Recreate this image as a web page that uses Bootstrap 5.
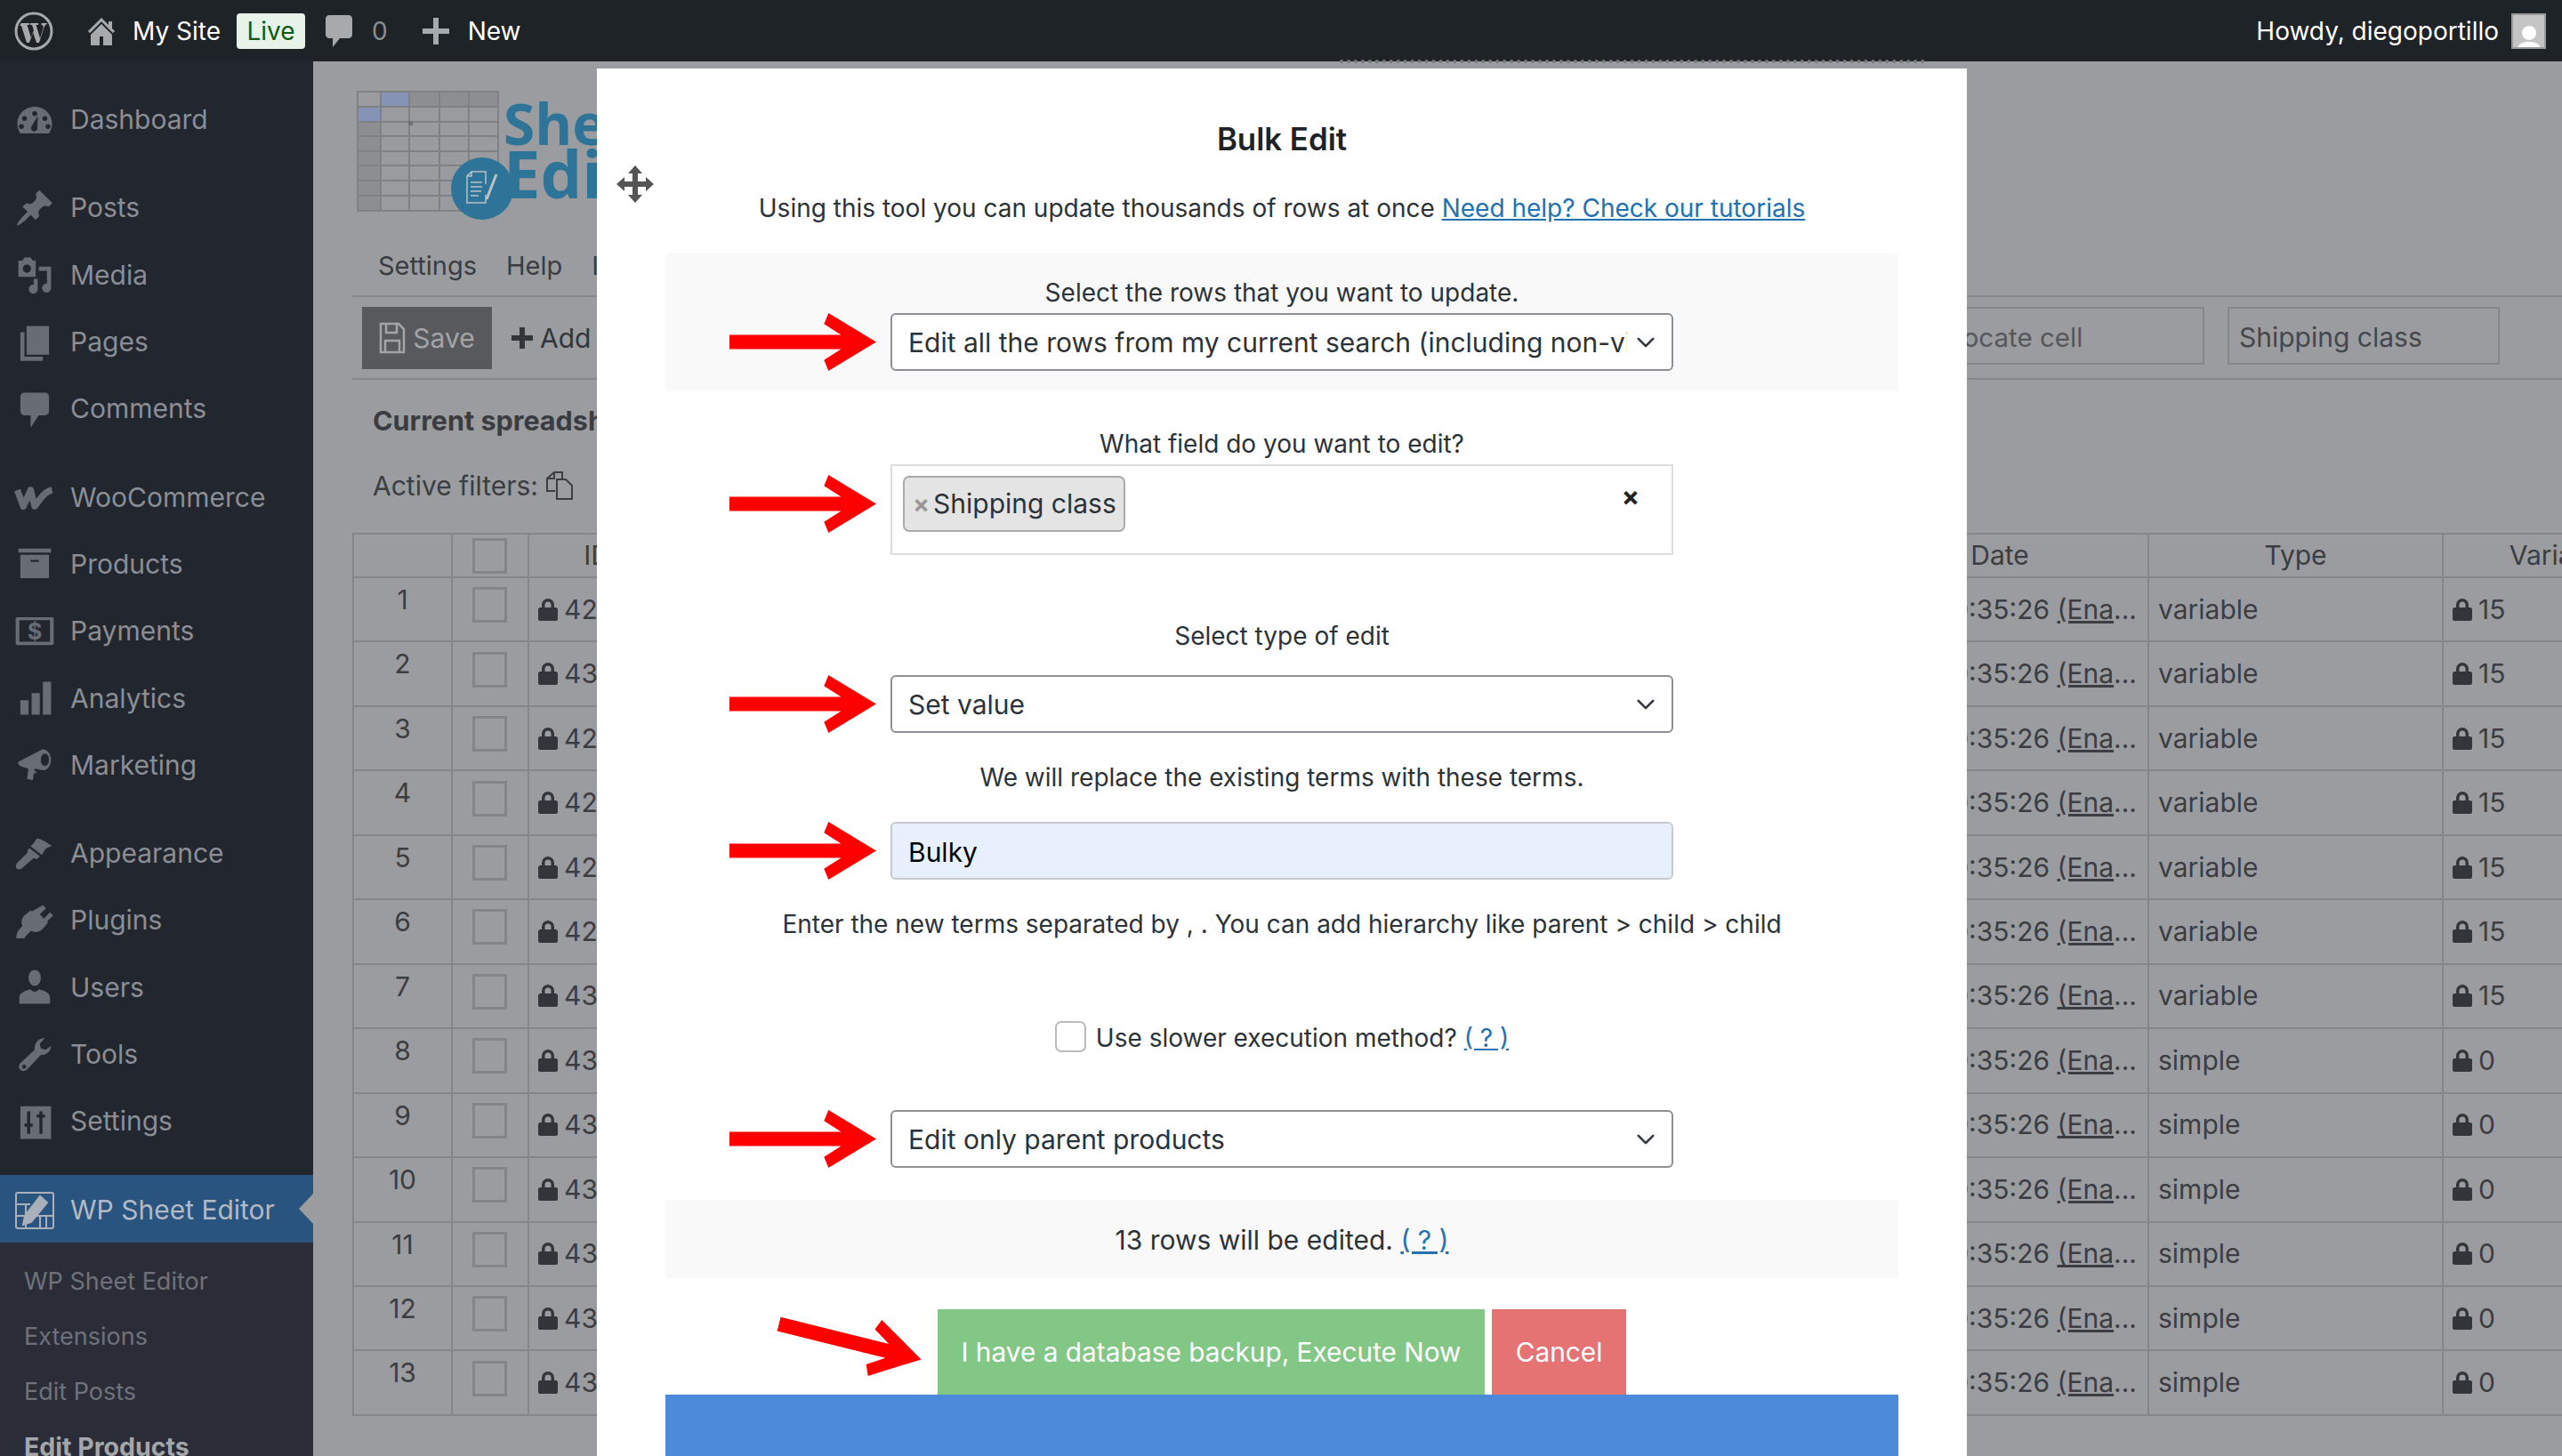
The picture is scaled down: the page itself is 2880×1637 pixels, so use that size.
<!DOCTYPE html>
<html lang="en">
<head>
    <meta charset="UTF-8">
    <meta name="viewport" content="width=device-width, initial-scale=1.0">
    <title>Bulk Edit</title>
    <link href="https://cdn.jsdelivr.net/npm/bootstrap@5.3.0/dist/css/bootstrap.min.css" rel="stylesheet">
    <style>
        html, body { height: 1637px; overflow: hidden; }
        body {
            font-family: Inter, "Liberation Sans", sans-serif;
            font-size: 28px;
            background-color: #9b9c9f;
            color: #3b3d42;
        }
        /* admin bar */
        .adminbar { height: 69px; background-color: #1e2328; color: #fff; padding: 0; font-size: 28px; }
        .bar-logo { width: 46px; height: 46px; margin-left: 15px; margin-right: 33px; fill: #a7aaad; }
        .bar-icon { fill: #a7aaad; flex: none; }
        .bar-site { margin-left: 15px; }
        .live-tag { background-color: #e7f3e9; color: #0e5a14; border-radius: 4px; height: 40px; width: 77px; line-height: 40px; text-align: center; margin: 0 23px 0 18px; }
        .bar-count { color: #8a8e93; margin: 0 39px 0 22px; }
        .bar-new { margin-left: 21px; }
        .bar-user { margin-right: 18px; }
        .bar-avatar { width: 39px; height: 40px; background-color: #c4c4c4; border: 2px solid #9a9a9a; margin-left: 14px; overflow: hidden; }
        .drag-strip { position: absolute; left: 1506px; top: 67px; width: 658px; border-top: 4px dotted #77787c; }

        /* sidebar */
        .page-wrap { height: 1568px; }
        .side-menu { width: 352px; flex: none; background-color: #22262f; padding-top: 27px; overflow: hidden; }
        .side-item { display: flex; align-items: center; height: 75.3px; padding-top: 2px; color: #8b8e95; font-size: 30px; position: relative; }
        .side-item svg { width: 46px; height: 46px; margin-left: 16px; margin-right: 17px; fill: #686c74; flex: none; }
        .side-gap { margin-top: 24px; }
        .side-active { background-color: #2a5480; color: #b3bac4; }
        .side-active svg { fill: none; stroke: #a9b0ba; }
        .side-active::after {
            content: ""; position: absolute; right: 0; top: 21px;
            border: 17px solid transparent; border-right: 16px solid #9b9c9f; border-left: 0;
        }
        .side-sub { background-color: #2a2d37; padding-top: 13px; height: 300px; }
        .side-sub div { height: 62px; line-height: 62px; padding-left: 27px; font-size: 27px; color: #6f727a; }
        .side-sub .sub-current { color: #a4a6ab; font-weight: 700; font-size: 28.5px; }

        /* sheet behind the modal */
        .sheet-area { padding-top: 33px; overflow: hidden; min-width: 0; }
        .sheet-logo { margin-left: 49px; height: 146px; }
        .sheet-logo-name { font-family: "Open Sans", sans-serif; font-weight: 700; color: #2e7398; line-height: 56px; margin-left: -15px; padding-top: 9px; }
        .sheet-logo-name div:first-child { font-size: 64px; }
        .sheet-logo-name div:last-child { font-size: 74px; }
        .sheet-menu { margin-left: 44px; height: 86px; border-bottom: 2px solid #87888c; padding: 34px 0 0 29px; gap: 33px; font-size: 29px; color: #3a3c41; line-height: 34px; }
        .sheet-tools { margin-left: 44px; height: 93px; border-bottom: 2px solid #87888c; padding: 11px 70px 0 11px; }
        .save-btn { width: 146px; height: 70px; background-color: #58595d; color: #a3a4a8; border: 0; border-radius: 0; font-size: 30px; padding: 0; }
        .save-btn:hover { background-color: #58595d; color: #a3a4a8; }
        .add-btn { color: #33353a; margin-left: 22px; font-size: 30px; height: 70px; }
        .tool-input { height: 65px; width: 306px; background: transparent; border: 2px solid #85868a; padding: 0 11px; font-size: 30px; color: #45474c; line-height: 65px; }
        .tool-input.placeholder-ish { width: 301px; color: #55565b; margin-right: 26px; font-size: 29.5px; }
        .sheet-current { margin: 28px 0 0 67px; line-height: 36px; font-weight: 700; font-size: 30.5px; color: #3a3c41; }
        .sheet-filters { margin: 37px 0 0 67px; line-height: 36px; font-size: 30px; }
        .grid-table {
            table-layout: fixed; width: 2639px; margin: 35px 0 0 44px;
            border-collapse: collapse; color: #3b3d42; font-size: 30px;
        }
        .grid-table th, .grid-table td { border: 2px solid #85868a; padding: 0 12px; white-space: nowrap; overflow: hidden; font-weight: 400; }
        .grid-table th { height: 49px; text-align: center; vertical-align: middle; }
        .grid-table td { height: 72.46px; vertical-align: middle; }
        .grid-table td.row-num { text-align: center; vertical-align: top; padding-top: 2px; font-size: 30px; }
        .grid-table td.type-cell { padding-left: 10px; }
        .grid-check { display: block; width: 39px; height: 40px; border: 3px solid #84858a; margin: 0 auto; position: relative; top: -5px; left: -1px; }
        .grid-table th .grid-check { top: 0; }
        .lock-icon { width: 22px; height: 26px; fill: #33353a; margin-right: 7px; margin-left: -2px; vertical-align: -2px; }
        .date-cell a { color: inherit; }
        .col-num { width: 111px; }
        .col-check { width: 86px; }
        .col-id { width: 154px; }
        .col-title { width: 1333px; }
        .col-date { width: 334px; }
        .col-type { width: 331px; }
        .col-vari { width: 290px; }

        /* modal */
        .bulk-modal {
            position: absolute; left: 671px; top: 77px; width: 1540px; height: 1560px;
            background-color: #fff; color: #2c3338; padding: 0 77px; overflow: hidden;
        }
        .move-handle { position: absolute; left: 22px; top: 109px; width: 42px; height: 42px; fill: #555; }
        .bulk-title { font-size: 34.8px; font-weight: 600; color: #1d2327; text-align: center; margin: 0; padding-top: 59px; line-height: 40px; }
        .bulk-intro { text-align: center; margin: 40px 0 0; line-height: 36px; }
        .bulk-intro a, .help-link { color: #2271b1; }
        .shade-box { background-color: #f9f9f9; }
        .field-label { text-align: center; line-height: 36px; }
        .field-row { display: flex; align-items: center; padding-left: 72px; }
        .field-arrow { width: 165px; height: 65px; fill: #f00; margin-right: 16px; flex: none; }
        .field-control {
            width: 880px; height: 65px; flex: none; font-size: 30px; color: #2c3338; padding: 2px 50px 0 18px;
            border: 2px solid #8c8f94; border-radius: 6px; background-size: 30px 22px; background-position: right 14px center;
        }
        .bulky-input { background-color: #e8f0fe; border-color: #c6c9cd; color: #000; padding-right: 18px; }
        .tags-box { width: 880px; height: 102px; border: 2px solid #ddd; padding: 11px 12px; flex: none; }
        .tag-chip { height: 63px; width: 250px; background-color: #e4e4e4; border: 2px solid #aaa; border-radius: 7px; line-height: 59px; padding-left: 9px; white-space: nowrap; font-size: 30px; }
        .tag-chip span { color: #999; font-weight: 700; font-size: 28px; margin-right: 4px; }
        .tags-clear { font-weight: 700; color: #222; margin: 8px 24px 0 0; font-size: 30px; line-height: 30px; }
        .tags-arrow { margin-bottom: 14px; }
        .slow-check { width: 35px; height: 35px; margin: 0 11px 0 0; border: 2px solid #bbb; border-radius: 6px; flex: none; }
        .bulk-actions { padding-left: 125px; height: 96px; margin-top: 35px; }
        .bulk-actions .field-arrow { transform: rotate(14deg); margin-right: 16px; margin-top: -24px; }
        .run-btn, .stop-btn { height: 96px; border: 0; border-radius: 0; color: #fff; font-size: 29.8px; padding: 0; }
        .run-btn { width: 615px; background-color: #82c785; margin-right: 8px; }
        .stop-btn { width: 151px; background-color: #e57373; }
        .blue-strip { height: 69px; background-color: #4d8ada; }
        .bulk-first { margin-top: 33px; height: 155px; padding-top: 26px; }
        .bulk-first .field-label { margin-bottom: 5px; }
        .bulk-second { margin-top: 41px; margin-bottom: 5px; }
        .bulk-third { margin-top: 73px; margin-bottom: 26px; }
        .bulk-note { margin-top: 32px; margin-bottom: 32px; }
        .bulk-hint { margin-top: 32px; }
        .bulk-slow { height: 35px; margin-top: 91px; }
        .bulk-slow span { position: relative; top: 1px; }
        .bulk-parent { margin-top: 65px; }
        .bulk-count { margin-top: 36px; height: 88px; line-height: 90px; font-size: 30px; }
    </style>
</head>
<body>
    <!-- admin bar -->
    <nav class="navbar adminbar flex-nowrap">
        <div class="d-flex align-items-center">
            <svg class="bar-logo" viewBox="0 0 46 46"><circle cx="23" cy="23" r="20" fill="none" stroke="#a7aaad" stroke-width="3"/><path d="M9 14h9v2h-2.500l4.500 15 3-9-2-6h-2v-2h9v2h-2.500l4.500 15 3.500-11c.7-2.500-.5-4-2-4v-2h7c-1 1-3 2-4 5l-5.500 17h-3l-4-12-4 12h-3l-6-19h-2z"/></svg>
            <svg class="bar-icon" width="40" height="40" viewBox="0 0 20 20"><path d="M16 8.500l1.530 1.530-1.060 1.060L10 4.620l-6.470 6.470-1.060-1.060L10 2.500l4 4v-2h2v4zm-6-2.460l6 5.990V18h-5v-5H9v5H4v-5.970z"/></svg>
            <span class="bar-site">My Site</span>
            <span class="live-tag">Live</span>
            <svg class="bar-icon" width="30" height="40" viewBox="0 0 15 20"><path d="M2 1h11c1 0 2 1 2 2v9c0 1-1 2-2 2H8l-4 5v-5H2c-1 0-2-1-2-2V3c0-1 1-2 2-2z"/></svg>
            <span class="bar-count">0</span>
            <svg class="bar-icon" width="30" height="30" viewBox="0 0 30 30"><path d="M12 0h6v12h12v6H18v12h-6V18H0v-6h12z"/></svg>
            <span class="bar-new">New</span>
        </div>
        <div class="d-flex align-items-center bar-user">
            <span>Howdy, diegoportillo</span>
            <div class="bar-avatar">
                <svg width="35" height="36" viewBox="0 0 35 36"><circle cx="18" cy="15" r="8" fill="#fff"/><path d="M4 36c1-9 7-11 14-11s13 2 14 11z" fill="#fff"/></svg>
            </div>
        </div>
    </nav>
    <div class="drag-strip"></div>

    <div class="d-flex page-wrap">
        <!-- admin menu -->
        <div class="side-menu">
            <div class="side-item"><svg viewBox="0 0 20 20"><path fill-rule="evenodd" d="M3 16.500h14c1-1.300 1.500-3 1.500-4.600C18.500 7.200 14.700 3.500 10 3.500S1.500 7.200 1.500 11.900c0 1.600.5 3.300 1.500 4.600zM5 8a1.200 1.200 0 1 1 0 2.400A1.200 1.200 0 0 1 5 8zm5-2.400a1.200 1.200 0 1 1 0 2.400 1.200 1.200 0 0 1 0-2.400zm5 2.400a1.200 1.200 0 1 1 0 2.400A1.200 1.200 0 0 1 15 8zM3.500 12a1.200 1.200 0 1 1 0 2.400 1.200 1.200 0 0 1 0-2.400zm13 0a1.200 1.200 0 1 1 0 2.400 1.200 1.200 0 0 1 0-2.400zM11.500 8l-.2 5.500a1.600 1.600 0 1 1-2.700-.7z"/></svg>Dashboard</div>
            <div class="side-item side-gap"><svg viewBox="0 0 20 20"><path d="M10.440 3.020l1.820-1.820 6.360 6.350-1.830 1.820c-1.050-.68-2.480-.57-3.410.36l-.75.75c-.92.93-1.040 2.350-.35 3.410l-1.830 1.820-2.410-2.410-2.800 2.790c-.42.42-3.380 2.710-3.800 2.290s1.860-3.390 2.280-3.810l2.790-2.790L4.100 9.360l1.830-1.820c1.050.69 2.480.57 3.400-.36l.75-.75c.93-.92 1.050-2.350.36-3.410z"/></svg>Posts</div>
            <div class="side-item"><svg viewBox="0 0 20 20"><path fill-rule="evenodd" d="M2 3h2l1-1.500h3L9 3h1.500v8H2zm4.200 2a2 2 0 1 0 0 4 2 2 0 0 0 0-4z"/><path d="M12 6h6v10.500a2.200 2.200 0 1 1-2-2.200V8h-4zM9.500 12h2v5a2.200 2.200 0 1 1-2-2.200z"/></svg>Media</div>
            <div class="side-item"><svg viewBox="0 0 20 20"><path d="M6 2h11v14H6z"/><path d="M3 5h2v12h9v2H3z"/></svg>Pages</div>
            <div class="side-item"><svg viewBox="0 0 20 20"><path d="M5 2h10c1.100 0 2 .9 2 2v7c0 1.100-.9 2-2 2h-3l-4 6v-6H5c-1.100 0-2-.9-2-2V4c0-1.100.9-2 2-2z"/></svg>Comments</div>
            <div class="side-item side-gap"><svg viewBox="0 0 20 20"><path d="M1.500 6.500l3 8 3.500-8 2 8 3-4c1.500-2 3-3.500 5.500-4" fill="none" stroke="#686c74" stroke-width="3.200" stroke-linejoin="round"/></svg>WooCommerce</div>
            <div class="side-item"><svg viewBox="0 0 20 20"><path fill-rule="evenodd" d="M2 2.500h16v2H2zM3 5.500h14v11.500H3zM8 8v1h4V8z"/></svg>Products</div>
            <div class="side-item"><svg viewBox="0 0 20 20"><path fill-rule="evenodd" d="M1.500 3h17c.5 0 .8.300.8.800v12c0 .5-.3.800-.8.800h-17c-.5 0-.8-.3-.8-.8v-12c0-.5.300-.8.800-.8zM2.500 4.500v10.500h15V4.500z"/><text x="10" y="14" text-anchor="middle" font-size="11" font-weight="700" font-family="Inter, sans-serif">$</text></svg>Payments</div>
            <div class="side-item"><svg viewBox="0 0 20 20"><path d="M3 11h4v7H3zM8.500 7.500h4V18h-4zM14 2h4v16h-4z"/></svg>Analytics</div>
            <div class="side-item"><svg viewBox="0 0 20 20"><path fill-rule="evenodd" d="M2 8.500L13.500 2.500c2-.8 4.500 1.800 4.500 5s-2.300 5.800-4.500 5L10 11.800l-.2 1 1 .4-.2 1-1-.3-.5 3.600-2.800-.7.6-4.900-2.900-.9C2 10.500 1.700 9 2 8.500zM15 4.500c-1.200 0-2 1.300-2 3s.8 3 2 3 2-1.300 2-3-.8-3-2-3z"/></svg>Marketing</div>
            <div class="side-item side-gap"><svg viewBox="0 0 20 20"><path d="M11 2.500c2.500.3 4 1.300 7.500 3.700-1.500.5-3 .7-3.800 2.300l-1.200 2-5.500-4.200 1.300-1.300zM7.500 7.300l5 3.800-1.500 1.500-1.500-.5-5.500 4.800c-1 .9-2.500.9-3-.1s-.1-2 .8-2.800l4.800-4.700-.2-1z"/></svg>Appearance</div>
            <div class="side-item"><svg viewBox="0 0 20 20"><path d="M14 2.500l1.500 1.500-3 3 2 2 3-3L19 7.500l-3 3 .5.500-2.500 3c-1.800 1.800-4 2-5.800 1l-2.700 2.700-.5 1H1c0-2 .5-3.500 2-5l1-1C3.200 11 3.500 9 5 7.500l3-2.500.5.500z"/></svg>Plugins</div>
            <div class="side-item"><svg viewBox="0 0 20 20"><path d="M10 1.500c1.900 0 3 1.800 3 3.800s-1.200 4-3 4-3-2-3-4 1.100-3.800 3-3.800zM2.500 18v-3c0-1.500 1-2.500 3.500-3.500L8 11c.5.800 1.200 1.200 2 1.200s1.500-.4 2-1.200l2 .5c2.500 1 3.500 2 3.500 3.500v3z"/></svg>Users</div>
            <div class="side-item"><svg viewBox="0 0 20 20"><path fill-rule="evenodd" d="M18 5.500c0 2.500-2.200 4.800-5 4.500l-6.500 7c-1.100 1.200-2.800 1.200-3.600.2-.9-1-.7-2.400.3-3.400l6.800-6.300C9.600 4.500 11.500 1.800 15 1.800l-2.500 2.800.5 2.300 2.300.6zM4.800 14.800a1 1 0 1 0 0 2 1 1 0 0 0 0-2z"/></svg>Tools</div>
            <div class="side-item"><svg viewBox="0 0 20 20"><path fill-rule="evenodd" d="M3 2.500h15v16H3zM6.300 5v6H5v1.500h1.300V16h1.500v-3.500H9V11H7.800V5zm6 0v1.500H11V8h1.300v8h1.500V8H15V6.500h-1.200V5z"/></svg>Settings</div>
            <div class="side-item side-gap side-active"><svg viewBox="0 0 46 46" stroke-width="2"><rect x="2" y="4" width="42" height="40" rx="2"/><path d="M2 17h16M2 30h42M13 17v27M29 30v14M36 30v14"/><path d="M10 40l2-10L29 8l8 7-18 22z" fill="#a9b0ba"/></svg>WP Sheet Editor</div>
            <div class="side-sub">
                <div>WP Sheet Editor</div>
                <div>Extensions</div>
                <div>Edit Posts</div>
                <div class="sub-current">Edit Products</div>
            </div>
        </div>

        <!-- spreadsheet page, dimmed behind the modal -->
        <div class="sheet-area flex-grow-1">
            <div class="d-flex sheet-logo">
                <svg width="180" height="146" viewBox="0 0 180 146">
                    <rect x="1" y="1" width="158" height="134" fill="#9a9b9e"/>
                    <rect x="27" y="1" width="132" height="17" fill="#8d8e92"/>
                    <rect x="1" y="18" width="26" height="117" fill="#8d8e92"/>
                    <rect x="27" y="1" width="32" height="17" fill="#8594b4"/>
                    <rect x="1" y="18" width="26" height="17" fill="#8594b4"/>
                    <path d="M1 1h158v134H1zM27 1v134M59 1v134M93 1v134M126 1v134M1 18h158M1 35h158M1 51h158M1 68h158M1 84h158M1 101h158M1 118h158" fill="none" stroke="#808186" stroke-width="2"/>
                    <rect x="58" y="34" width="5" height="5" fill="#6f7074"/>
                    <circle cx="141" cy="110" r="35" fill="#2e7398"/>
                    <path d="M124 96l5-5h16v14M145 117v9h-21V96h5v-5" fill="none" stroke="#b9c2c8" stroke-width="1.500"/>
                    <path d="M128 103h13M128 108h13M128 113h12M128 118h9" stroke="#b9c2c8" stroke-width="1.500"/>
                    <path d="M146 122l11-28" stroke="#b9c2c8" stroke-width="3"/>
                </svg>
                <div class="sheet-logo-name"><div>Sheet</div><div>Editor</div></div>
            </div>
            <div class="d-flex sheet-menu"><span>Settings</span><span>Help</span><span>Import</span></div>
            <div class="d-flex justify-content-between sheet-tools">
                <div class="d-flex align-items-start">
                    <button class="btn save-btn d-flex align-items-center justify-content-center gap-2">
                        <svg width="30" height="36" viewBox="0 0 30 36" fill="none" stroke="#a3a4a8" stroke-width="2.500"><path d="M2 2h20l6 6v26H2z"/><path d="M8 2v10h12V2M7 34V21h16v13"/></svg>Save
                    </button>
                    <span class="add-btn d-flex align-items-center"><svg width="24" height="24" viewBox="0 0 24 24" class="me-2" fill="#33353a"><path d="M9 0h6v9h9v6h-9v9H9v-9H0V9h9z"/></svg>Add</span>
                </div>
                <div class="d-flex">
                    <div class="tool-input placeholder-ish">Locate cell</div>
                    <div class="tool-input">Shipping class</div>
                </div>
            </div>
            <div class="sheet-current">Current spreadsheet</div>
            <div class="sheet-filters d-flex align-items-center gap-2">Active filters:
                <svg width="32" height="34" viewBox="0 0 32 34" fill="none" stroke="#3b3d42" stroke-width="2"><path d="M11 23H2V9l8-7h9v8"/><path d="M13 10h10l7 7v15H13zM10 2v7H2"/></svg>
            </div>
            <table class="grid-table">
                <colgroup><col class="col-num"><col class="col-check"><col class="col-id"><col class="col-title"><col class="col-date"><col class="col-type"><col class="col-vari"></colgroup>
                <thead><tr><th></th><th><span class="grid-check"></span></th><th>ID</th><th>Title</th><th>Date</th><th>Type</th><th>Variations</th></tr></thead>
                <tbody id="sheetRows"></tbody>
            </table>
        </div>
    </div>

    <!-- bulk edit modal -->
    <div class="bulk-modal">
        <svg class="move-handle" viewBox="0 0 42 42"><path d="M21 0l8 9h-5v9h9v-5l9 8-9 8v-5h-9v9h5l-8 9-8-9h5v-9H9v5l-9-8 9-8v5h9V9h-5z"/></svg>
        <h5 class="bulk-title">Bulk Edit</h5>
        <p class="bulk-intro">Using this tool you can update thousands of rows at once <a href="#">Need help? Check our tutorials</a></p>

        <div class="shade-box bulk-first">
            <div class="field-label">Select the rows that you want to update.</div>
            <div class="field-row">
                <svg class="field-arrow" viewBox="0 0 163 64"><polygon points="0,24 124,24 105,12 110,0 163,32 110,64 105,52 124,40 0,40"/></svg>
                <select class="form-select field-control"><option>Edit all the rows from my current search (including non-visible rows)</option></select>
            </div>
        </div>

        <div class="field-label bulk-second">What field do you want to edit?</div>
        <div class="field-row">
            <svg class="field-arrow tags-arrow" viewBox="0 0 163 64"><polygon points="0,24 124,24 105,12 110,0 163,32 110,64 105,52 124,40 0,40"/></svg>
            <div class="tags-box d-flex justify-content-between align-items-start">
                <div class="tag-chip"><span>×</span>Shipping class</div>
                <div class="tags-clear">×</div>
            </div>
        </div>

        <div class="field-label bulk-third">Select type of edit</div>
        <div class="field-row bulk-type">
            <svg class="field-arrow" viewBox="0 0 163 64"><polygon points="0,24 124,24 105,12 110,0 163,32 110,64 105,52 124,40 0,40"/></svg>
            <select class="form-select field-control"><option>Set value</option></select>
        </div>
        <div class="field-label bulk-note">We will replace the existing terms with these terms.</div>
        <div class="field-row bulk-value">
            <svg class="field-arrow" viewBox="0 0 163 64"><polygon points="0,24 124,24 105,12 110,0 163,32 110,64 105,52 124,40 0,40"/></svg>
            <input type="text" class="form-control field-control bulky-input" value="Bulky">
        </div>
        <div class="field-label bulk-hint">Enter the new terms separated by , . You can add hierarchy like parent &gt; child &gt; child</div>

        <div class="d-flex justify-content-center align-items-center bulk-slow">
            <input type="checkbox" class="form-check-input slow-check">
            <span>Use slower execution method? <a href="#" class="help-link">( ? )</a></span>
        </div>

        <div class="field-row bulk-parent">
            <svg class="field-arrow" viewBox="0 0 163 64"><polygon points="0,24 124,24 105,12 110,0 163,32 110,64 105,52 124,40 0,40"/></svg>
            <select class="form-select field-control"><option>Edit only parent products</option></select>
        </div>

        <div class="shade-box field-label bulk-count">13 rows will be edited. <a href="#" class="help-link">( ? )</a></div>

        <div class="d-flex align-items-center bulk-actions">
            <svg class="field-arrow" viewBox="0 0 163 64"><polygon points="0,24 124,24 105,12 110,0 163,32 110,64 105,52 124,40 0,40"/></svg>
            <button class="btn run-btn">I have a database backup, Execute Now</button>
            <button class="btn stop-btn">Cancel</button>
        </div>
        <div class="blue-strip"></div>
    </div>

    <script>
        const ids = ['42','43','42','42','42','42','43','43','43','43','43','43','43'];
        const lock = '<svg class="lock-icon" viewBox="0 0 22 26"><path d="M4 11V8a7 7 0 0 1 14 0v3h2c1 0 2 1 2 2v11c0 1-1 2-2 2H2c-1 0-2-1-2-2V13c0-1 1-2 2-2zm3.500 0h7V8a3.500 3.500 0 0 0-7 0z"/></svg>';
        let html = '';
        ids.forEach(function(id, i) {
            const isVariable = i < 7;
            html += '<tr><td class="row-num">' + (i + 1) + '</td>' +
                '<td><span class="grid-check"></span></td>' +
                '<td>' + lock + id + '</td><td></td>' +
                '<td class="text-end date-cell">10:35:26 <a href="#">(Ena</a>...</td>' +
                '<td class="type-cell">' + (isVariable ? 'variable' : 'simple') + '</td>' +
                '<td>' + lock + (isVariable ? '15' : '0') + '</td></tr>';
        });
        document.getElementById('sheetRows').innerHTML = html;
    </script>
</body>
</html>
